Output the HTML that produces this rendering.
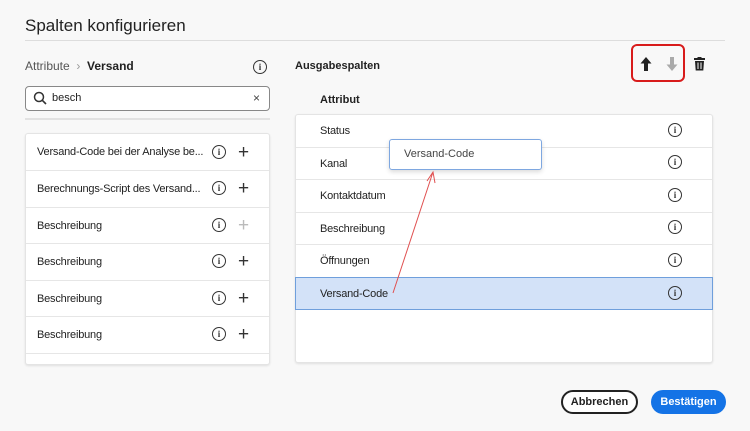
<!DOCTYPE html>
<html><head><style>
*{margin:0;padding:0;box-sizing:border-box}
body{width:750px;height:431px;background:#f8f8f8;font-family:"Liberation Sans",sans-serif;color:#222;position:relative;overflow:hidden;font-size:11px}
.a{position:absolute}
.row{position:absolute;left:0;right:0;border-bottom:1px solid #e6e6e6;display:flex;align-items:center;padding-left:11px;letter-spacing:-0.2px}
.info{position:absolute;width:14px;height:14px;border:1.2px solid #333;border-radius:50%;font:bold 9px "Liberation Serif",serif;text-align:center;line-height:12px;color:#333}
.plus{position:absolute;font-size:19px;line-height:13px;color:#333;font-weight:300}
</style></head><body>
<div class="a" style="left:25px;top:16px;font-size:17px;color:#222">Spalten konfigurieren</div>
<div class="a" style="left:25px;top:40px;width:700px;height:1px;background:#ddd"></div>
<div class="a" style="left:25px;top:59px;font-size:12px;color:#555">Attribute &nbsp;<span style="color:#999">›</span>&nbsp; <b style="color:#222">Versand</b></div>
<div class="info" style="left:253px;top:60px">i</div>
<div class="a" style="left:25px;top:86px;width:245px;height:25px;border:1px solid #888;border-radius:4px;background:#fff"></div>
<svg class="a" style="left:33px;top:91px" width="14" height="14"><circle cx="6" cy="6" r="4.5" fill="none" stroke="#333" stroke-width="1.5"/><line x1="9.3" y1="9.3" x2="13" y2="13" stroke="#333" stroke-width="1.6"/></svg>
<div class="a" style="left:52px;top:92px;font-size:11px">besch</div>
<div class="a" style="left:253px;top:91px;font-size:12px;color:#444">×</div>
<div class="a" style="left:25px;top:118px;width:245px;height:2px;background:#e2e2e2"></div>
<div class="a" style="left:25px;top:133px;width:245px;height:232px;background:#fff;border:1px solid #e4e4e4;border-radius:3px;box-shadow:0 1px 2px rgba(0,0,0,.1)">
<div class="row" style="top:0;height:37px">Versand-Code bei der Analyse be...</div>
<div class="row" style="top:37px;height:37px">Berechnungs-Script des Versand...</div>
<div class="row" style="top:74px;height:36px">Beschreibung</div>
<div class="row" style="top:110px;height:37px">Beschreibung</div>
<div class="row" style="top:147px;height:36px">Beschreibung</div>
<div class="row" style="top:183px;height:37px">Beschreibung</div>
</div>
<div class="info" style="left:212px;top:145px">i</div><div class="plus" style="left:238px;top:146px">+</div>
<div class="info" style="left:212px;top:181px">i</div><div class="plus" style="left:238px;top:182px">+</div>
<div class="info" style="left:212px;top:218px">i</div><div class="plus" style="left:238px;top:219px;color:#bbb">+</div>
<div class="info" style="left:212px;top:254px">i</div><div class="plus" style="left:238px;top:255px">+</div>
<div class="info" style="left:212px;top:291px">i</div><div class="plus" style="left:238px;top:292px">+</div>
<div class="info" style="left:212px;top:327px">i</div><div class="plus" style="left:238px;top:328px">+</div>

<div class="a" style="left:295px;top:60px;font-size:11px;font-weight:bold">Ausgabespalten</div>
<div class="a" style="left:631px;top:44px;width:54px;height:38px;border:2px solid #d81b1b;border-radius:6px"></div>
<svg class="a" style="left:639px;top:56px" width="14" height="16"><path d="M7 1 L12.5 7.5 H9 V15 H5 V7.5 H1.5 Z" fill="#222"/></svg>
<svg class="a" style="left:665px;top:56px" width="14" height="16"><path d="M7 15 L12.5 8.5 H9 V1 H5 V8.5 H1.5 Z" fill="#aaa"/></svg>
<svg class="a" style="left:693px;top:57px" width="13" height="14"><rect x="1" y="1" width="11" height="2" fill="#222"/><rect x="4.5" y="0" width="4" height="2" fill="#222"/><path d="M2 4 H11 L10.3 13.5 H2.7 Z" fill="#222"/><path d="M5 5.5V12M8 5.5V12" stroke="#fff" stroke-width="1"/></svg>
<div class="a" style="left:320px;top:94px;font-weight:bold">Attribut</div>
<div class="a" style="left:295px;top:114px;width:418px;height:249px;background:#fff;border:1px solid #e4e4e4;border-radius:3px;box-shadow:0 1px 2px rgba(0,0,0,.1)">
<div class="row" style="top:0;height:33px;padding-left:24px">Status</div>
<div class="row" style="top:33px;height:32px;padding-left:24px">Kanal</div>
<div class="row" style="top:65px;height:33px;padding-left:24px">Kontaktdatum</div>
<div class="row" style="top:98px;height:32px;padding-left:24px">Beschreibung</div>
<div class="row" style="top:130px;height:33px;padding-left:24px">Öffnungen</div>
<div class="row" style="top:162px;height:33px;padding-left:24px;background:#d3e2f8;border:1px solid #6f9fdc;left:-1px;right:-1px">Versand-Code</div>
</div>
<div class="info" style="left:668px;top:123px">i</div>
<div class="info" style="left:668px;top:155px">i</div>
<div class="info" style="left:668px;top:188px">i</div>
<div class="info" style="left:668px;top:220px">i</div>
<div class="info" style="left:668px;top:253px">i</div>
<div class="info" style="left:668px;top:286px">i</div>
<div class="a" style="left:389px;top:139px;width:153px;height:31px;background:#fff;border:1px solid #7ea7e0;border-radius:3px;box-shadow:0 2px 5px rgba(0,0,0,.15);padding:8px 0 0 14px;font-size:11px;color:#444">Versand-Code</div>
<svg class="a" style="left:0;top:0" width="750" height="431"><path d="M393 293 L433 172 M427 181 L433 172 L435 183" fill="none" stroke="#e05050" stroke-width="1"/></svg>
<div class="a" style="left:561px;top:390px;width:77px;height:24px;border:2px solid #222;border-radius:12px;background:#fff;text-align:center;line-height:20px;font-weight:bold;font-size:11px">Abbrechen</div>
<div class="a" style="left:651px;top:390px;width:75px;height:24px;border-radius:12px;background:#1473e6;color:#fff;text-align:center;line-height:24px;font-weight:bold;font-size:11px">Bestätigen</div>
</body></html>
